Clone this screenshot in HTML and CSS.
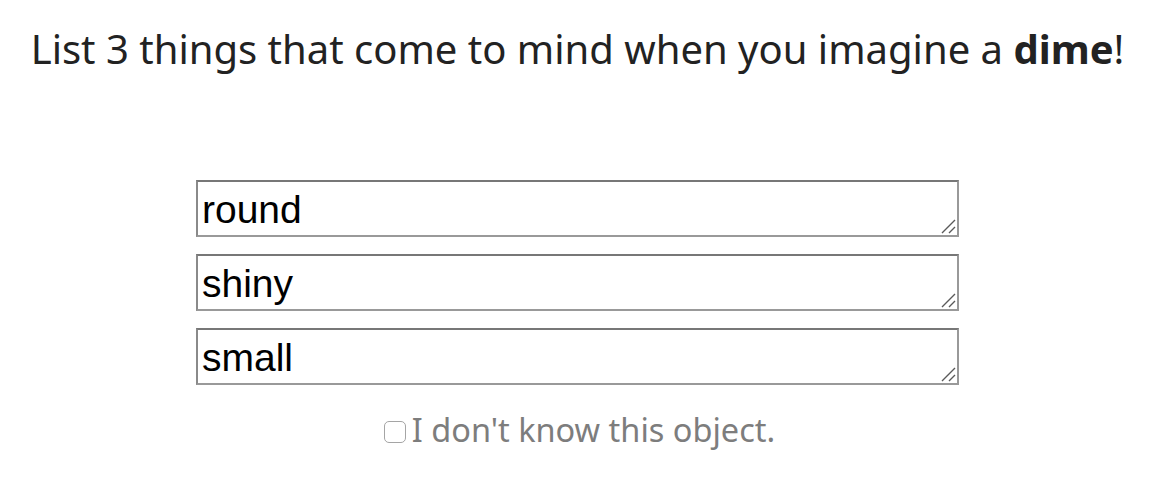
FILE: index.html
```html
<!DOCTYPE html>
<html>
<head>
<meta charset="utf-8">
<link rel="stylesheet" href="styles.css">
</head>
<body>
<div class="page">
  <h1 class="prompt">List 3 things that come to mind when you imagine a <b>dime</b>!</h1>
  <form class="answers">
    <div class="field">
      <textarea class="answer">round</textarea>
      <svg class="grip" width="16" height="16" viewBox="0 0 16 16"><path d="M2 15 L15 2 M9 15 L15 9" stroke="#5a5a5a" stroke-width="1.4" fill="none"/></svg>
    </div>
    <div class="field">
      <textarea class="answer">shiny</textarea>
      <svg class="grip" width="16" height="16" viewBox="0 0 16 16"><path d="M2 15 L15 2 M9 15 L15 9" stroke="#5a5a5a" stroke-width="1.4" fill="none"/></svg>
    </div>
    <div class="field">
      <textarea class="answer">small</textarea>
      <svg class="grip" width="16" height="16" viewBox="0 0 16 16"><path d="M2 15 L15 2 M9 15 L15 9" stroke="#5a5a5a" stroke-width="1.4" fill="none"/></svg>
    </div>
    <label class="unknown"><span class="check"></span><span>I don't know this object.</span></label>
  </form>
</div>
</body>
</html>
```
FILE: styles.css
```css
html, body {
  margin: 0;
  padding: 0;
  background: #fff;
}
.page {
  display: flex;
  flex-direction: column;
  align-items: center;
  padding-top: 22px;
  padding-left: 1px;
}
.prompt {
  margin: 0;
  font-family: "Noto Sans", "Open Sans", sans-serif;
  font-weight: 400;
  font-size: 40px;
  line-height: 54px;
  color: #222;
  text-align: center;
  white-space: nowrap;
}
.prompt b {
  font-weight: 700;
}
.answers {
  margin-top: 104px;
  width: 763px;
  display: flex;
  flex-direction: column;
  align-items: center;
  gap: 17px;
}
.field {
  position: relative;
  width: 763px;
  height: 57px;
}
.answer {
  display: block;
  box-sizing: border-box;
  width: 763px;
  height: 57px;
  margin: 0;
  padding: 5px 4px 0 4px;
  border-style: solid;
  border-width: 2px;
  border-color: #777 #999 #999 #8a8a8a;
  border-radius: 0;
  font-family: "Liberation Sans", Arial, sans-serif;
  font-size: 39px;
  line-height: 45px;
  color: #000;
  background: #fff;
  resize: none;
  overflow: hidden;
  outline: none;
}
.grip {
  position: absolute;
  right: 3px;
  bottom: 3px;
}
.unknown {
  display: flex;
  align-items: center;
  margin-top: 6px;
  padding-left: 4px;
  font-family: "Noto Sans", "Open Sans", sans-serif;
  font-size: 32.5px;
  line-height: 44px;
  color: #7d7d7d;
}
.check {
  display: block;
  flex: 0 0 22px;
  box-sizing: border-box;
  width: 22px;
  height: 22px;
  margin: 3px 6px 0 0;
  border: 1.5px solid #a5a5a5;
  border-radius: 5px;
  background: #fff;
}
```
